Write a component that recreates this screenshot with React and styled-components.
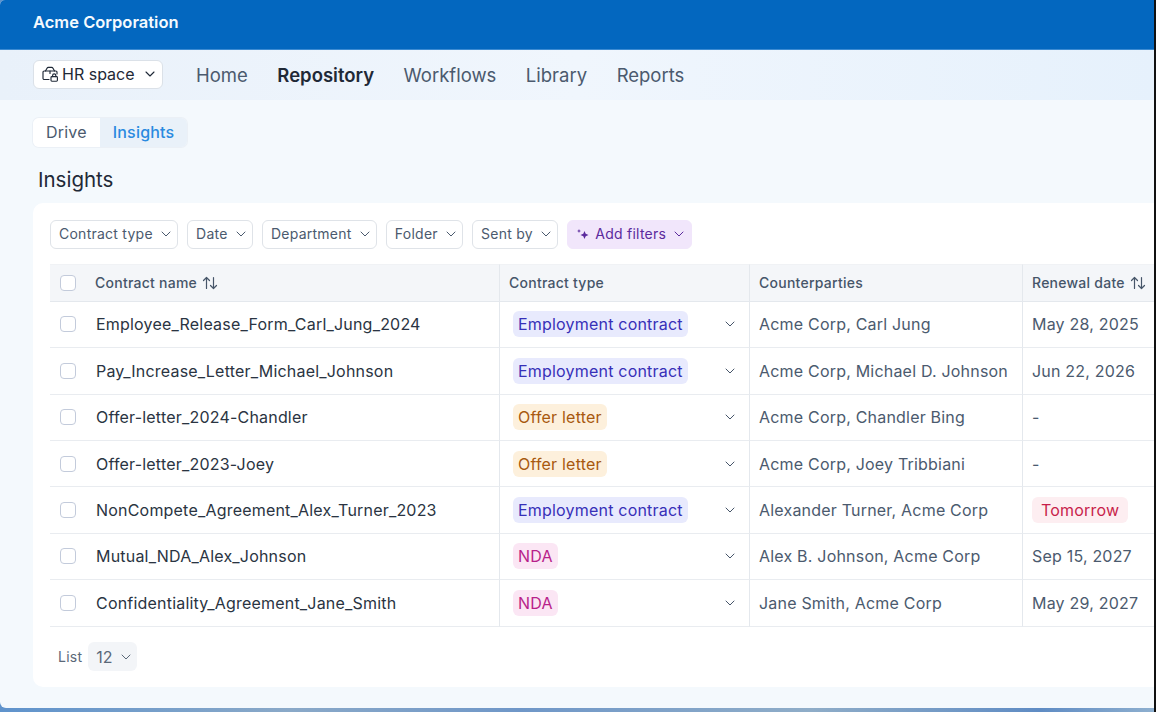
import React from 'react';
import styled, { createGlobalStyle } from 'styled-components';
import { ChevronDown } from 'lucide-react';

const Global = createGlobalStyle`
  html, body { margin: 0; padding: 0; background: #fff; }
  body { font-family: Inter, "Liberation Sans", sans-serif; overflow: hidden; }
`;

const Page = styled.div`
  width: 1156px;
  height: 712px;
  background:
    linear-gradient(#111, #111) right / 2px 100% no-repeat,
    linear-gradient(90deg, #5f93cc, #8aa9c8 25%, #6f97c8 45%, #8fadc8 70%, #5f8cc4 90%, #8fb0cf);
  overflow: hidden;
`;

const Frame = styled.div`
  width: 1154px;
  height: 708px;
  display: flex;
  flex-direction: column;
  background: #f4f9fd;
  border-radius: 5px 0 0 6px;
  overflow: hidden;
`;

const TopBar = styled.header`
  height: 50px;
  flex: none;
  box-sizing: border-box;
  background: #0367bf;
  color: #f5fafe;
  font-size: 16.5px;
  font-weight: 600;
  line-height: 44px;
  padding-left: 33px;
  border-bottom: 1px solid #3c8bd2;
`;

const NavBar = styled.nav`
  height: 50px;
  flex: none;
  box-sizing: border-box;
  display: flex;
  align-items: center;
  padding: 0 0 0 33px;
  background: linear-gradient(90deg, #e9f1fa, #f0f6fd 50%, #e6f1fc);
`;

const SpaceButton = styled.button`
  display: flex;
  align-items: center;
  height: 29px;
  width: 130px;
  box-sizing: border-box;
  padding: 0 0 0 8px;
  margin: 0 33px 2px 0;
  background: #fff;
  border: 1px solid #dbe1e8;
  border-radius: 6px;
  font: 400 16px Inter, sans-serif;
  color: #1f2937;
  gap: 3px;
`;

const NavLink = styled.a`
  font-size: 18.5px;
  font-weight: ${(p) => (p.$active ? 600 : 400)};
  color: ${(p) => (p.$active ? '#1f2937' : '#4b5a6e')};
  margin-right: 29.5px;
`;

const Content = styled.main`
  flex: 1;
  display: flex;
  flex-direction: column;
  padding: 18px 0 23px 33px;
  min-height: 0;
`;

const Tabs = styled.div`
  display: flex;
  flex: none;
  align-self: flex-start;
  height: 29px;
  border-radius: 6px;
  overflow: hidden;
  box-shadow: 0 0 0 1px #ebf0f6;
`;

const Tab = styled.div`
  display: flex;
  align-items: center;
  padding: 0 13px 2px;
  font-size: 16px;
  letter-spacing: 0.2px;
  font-weight: ${(p) => (p.$active ? 500 : 400)};
  background: ${(p) => (p.$active ? '#e9f1f9' : '#fff')};
  color: ${(p) => (p.$active ? '#2a8ae0' : '#4b5a6e')};
`;

const Title = styled.h1`
  margin: 19px 0 0 5px;
  height: 37px;
  flex: none;
  font-size: 20.5px;
  line-height: 28px;
  font-weight: 400;
  color: #1f2937;
`;

const Card = styled.section`
  flex: 1;
  box-sizing: border-box;
  background: #fff;
  border-radius: 10px 0 0 10px;
  padding: 17px 0 0 17px;
  display: flex;
  flex-direction: column;
`;

const Filters = styled.div`
  display: flex;
  flex: none;
  gap: 9px;
  height: 29px;
  margin-bottom: 15px;
`;

const Filter = styled.button`
  display: flex;
  align-items: center;
  gap: 5px;
  padding: 0 ${(p) => (p.$ai ? 4 : 3.25)}px 2px ${(p) => (p.$ai ? 8 : 8)}px;
  border: 1px solid ${(p) => (p.$ai ? '#f1e6fb' : '#dfe3e8')};
  border-radius: 6px;
  background: ${(p) => (p.$ai ? '#f1e6fb' : '#fff')};
  color: ${(p) => (p.$ai ? '#5b2a9d' : '#4b5a6e')};
  font: 400 14px Inter, sans-serif;
  letter-spacing: 0.25px;
`;

const Table = styled.div`
  display: grid;
  grid-template-columns: 450px 250px 273px 1fr;
  width: 1104px;
`;

const HeadCell = styled.div`
  height: 37.8px;
  box-sizing: border-box;
  display: flex;
  align-items: center;
  padding-left: ${(p) => (p.$first ? 10 : 9)}px;
  background: #f4f6f9;
  border-top: 1px solid #f0f2f5;
  border-bottom: 1px solid #e4e8ed;
  border-right: ${(p) => (p.$last ? 'none' : '1px solid #e4e8ed')};
  font-size: 14px;
  font-weight: 500;
  color: #465569;
  gap: 5px;
  letter-spacing: 0.25px;
`;

const Cell = styled.div`
  height: 46.4px;
  box-sizing: border-box;
  display: flex;
  align-items: center;
  padding-left: ${(p) => (p.$first ? 10 : 9)}px;
  padding-right: ${(p) => (p.$pill ? 11 : 0)}px;
  justify-content: ${(p) => (p.$pill ? 'space-between' : 'flex-start')};
  border-bottom: 1px solid #e9ecf0;
  border-right: ${(p) => (p.$last ? 'none' : '1px solid #e4e8ed')};
  font-size: 16px;
  letter-spacing: 0.2px;
  color: ${(p) => (p.$name ? '#2a3442' : '#4b5a6e')};
  white-space: nowrap;
`;

const Check = styled.span`
  width: 16px;
  height: 16px;
  box-sizing: border-box;
  flex: none;
  background: #fff;
  border: 1.5px solid #c3cbdb;
  border-radius: 4px;
  margin-right: ${(p) => (p.$head ? 14 : 20)}px;
`;

const pillColors = {
  employment: ['#e8eafd', '#3730b8'],
  offer: ['#fdf0dc', '#a8590f'],
  nda: ['#fbe6f4', '#b81f8a'],
  urgent: ['#fdeef1', '#c81e4b'],
};

const Pill = styled.span`
  display: inline-flex;
  align-items: center;
  height: 26px;
  padding: 0 ${(p) => (p.$kind === 'urgent' ? 9 : 5)}px;
  margin-left: ${(p) => (p.$kind === 'urgent' ? 0 : 4)}px;
  border-radius: 6px;
  background: ${(p) => pillColors[p.$kind][0]};
  color: ${(p) => pillColors[p.$kind][1]};
`;

const Footer = styled.div`
  display: flex;
  align-items: center;
  height: 60px;
  padding-left: 8px;
  gap: 6px;
  font-size: 14px;
  letter-spacing: 0.25px;
  color: #5b6878;
`;

const PageSize = styled.div`
  display: flex;
  align-items: center;
  gap: 5px;
  height: 29px;
  padding: 0 3px 0 8px;
  background: #f3f5f8;
  border-radius: 6px;
  font-size: 16px;
  letter-spacing: 0;
`;

const SpaceIcon = () => (
  <svg width="17" height="16" viewBox="0 0 17 16" fill="none" stroke="#1f2937" strokeWidth="1.15" strokeLinejoin="round" strokeLinecap="round">
    <path d="M7 13.5H2.2a1.2 1.2 0 0 1-1.2-1.2V6.2A1.2 1.2 0 0 1 2.2 5h11.6A1.2 1.2 0 0 1 15 6.2V8" />
    <path d="M3.5 5 5 2.2A1.6 1.6 0 0 1 6.4 1.4h3.2a1.6 1.6 0 0 1 1.4.8L12.5 5" />
    <path d="M8 5v2.4" />
    <rect x="9" y="10.6" width="6.4" height="4.6" rx="0.9" />
    <path d="M10.6 10.6V9.4a1.6 1.6 0 0 1 3.2 0v1.2" />
  </svg>
);

const Sparkle = () => (
  <svg width="14" height="14" viewBox="0 0 14 14" fill="#5b2a9d">
    <path d="M8.5 4l1.2 2.8L12.5 8 9.7 9.2 8.5 12 7.3 9.2 4.5 8l2.8-1.2z" />
    <path d="M3 2l.6 1.4L5 4l-1.4.6L3 6l-.6-1.4L1 4l1.4-.6z" />
  </svg>
);

const Sort = () => (
  <svg width="16" height="14" viewBox="0 0 16 14" fill="none" stroke="#465569" strokeWidth="1.2" strokeLinecap="round" strokeLinejoin="round">
    <path d="M4.5 12.5V1.5M1.5 4.5l3-3 3 3" />
    <path d="M11.5 1.5v11M8.5 9.5l3 3 3-3" />
  </svg>
);

const rows = [
  ['Employee_Release_Form_Carl_Jung_2024', 'employment', 'Employment contract', 'Acme Corp, Carl Jung', 'May 28, 2025'],
  ['Pay_Increase_Letter_Michael_Johnson', 'employment', 'Employment contract', 'Acme Corp, Michael D. Johnson', 'Jun 22, 2026'],
  ['Offer-letter_2024-Chandler', 'offer', 'Offer letter', 'Acme Corp, Chandler Bing', '-'],
  ['Offer-letter_2023-Joey', 'offer', 'Offer letter', 'Acme Corp, Joey Tribbiani', '-'],
  ['NonCompete_Agreement_Alex_Turner_2023', 'employment', 'Employment contract', 'Alexander Turner, Acme Corp', 'Tomorrow'],
  ['Mutual_NDA_Alex_Johnson', 'nda', 'NDA', 'Alex B. Johnson, Acme Corp', 'Sep 15, 2027'],
  ['Confidentiality_Agreement_Jane_Smith', 'nda', 'NDA', 'Jane Smith, Acme Corp', 'May 29, 2027'],
];

const filters = ['Contract type', 'Date', 'Department', 'Folder', 'Sent by'];

export default function App() {
  return (
    <Page>
      <Global />
      <Frame>
        <TopBar>Acme Corporation</TopBar>
        <NavBar>
          <SpaceButton>
            <SpaceIcon />
            HR space
            <ChevronDown size={16} strokeWidth={1.6} style={{ marginLeft: 4 }} />
          </SpaceButton>
          <NavLink>Home</NavLink>
          <NavLink $active>Repository</NavLink>
          <NavLink>Workflows</NavLink>
          <NavLink>Library</NavLink>
          <NavLink>Reports</NavLink>
        </NavBar>
        <Content>
          <Tabs>
            <Tab>Drive</Tab>
            <Tab $active>Insights</Tab>
          </Tabs>
          <Title>Insights</Title>
          <Card>
            <Filters>
              {filters.map((f) => (
                <Filter key={f}>
                  {f}
                  <ChevronDown size={16} strokeWidth={1.5} />
                </Filter>
              ))}
              <Filter $ai>
                <Sparkle />
                Add filters
                <ChevronDown size={16} strokeWidth={1.5} />
              </Filter>
            </Filters>
            <Table>
              <HeadCell $first>
                <Check $head />
                Contract name <Sort />
              </HeadCell>
              <HeadCell>Contract type</HeadCell>
              <HeadCell>Counterparties</HeadCell>
              <HeadCell $last>
                Renewal date <Sort />
              </HeadCell>
              {rows.map(([name, kind, type, party, date]) => (
                <React.Fragment key={name}>
                  <Cell $first $name>
                    <Check />
                    {name}
                  </Cell>
                  <Cell $pill>
                    <Pill $kind={kind}>{type}</Pill>
                    <ChevronDown size={16} strokeWidth={1.5} color="#465569" />
                  </Cell>
                  <Cell>{party}</Cell>
                  <Cell $last>{date === 'Tomorrow' ? <Pill $kind="urgent">{date}</Pill> : date}</Cell>
                </React.Fragment>
              ))}
            </Table>
            <Footer>
              List
              <PageSize>
                12
                <ChevronDown size={16} strokeWidth={1.5} />
              </PageSize>
            </Footer>
          </Card>
        </Content>
      </Frame>
    </Page>
  );
}
